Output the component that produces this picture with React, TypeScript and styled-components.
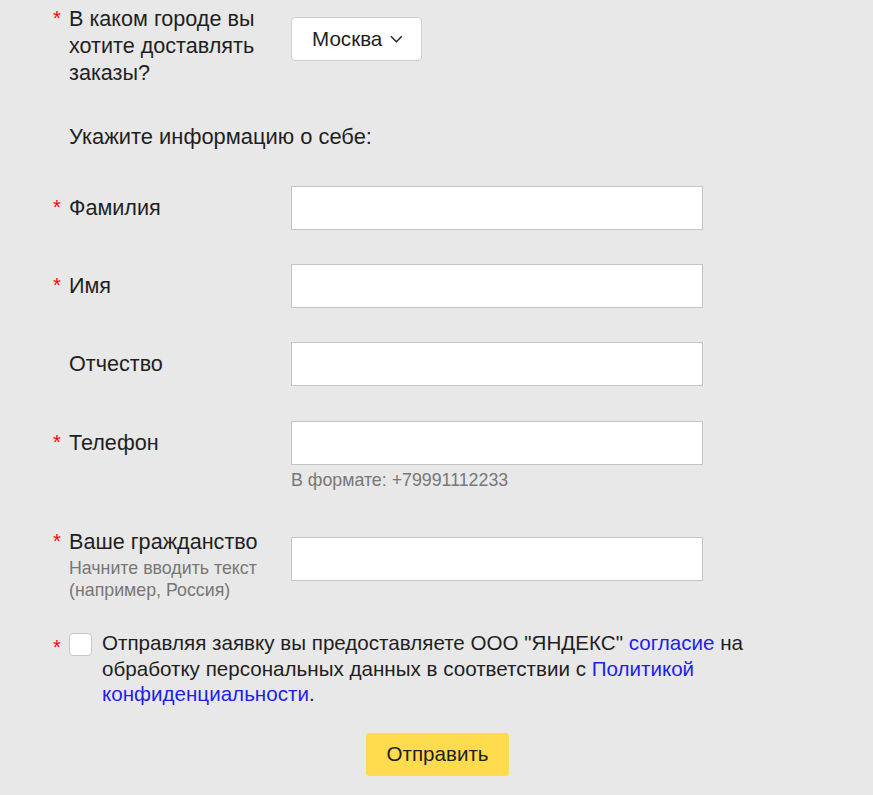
import React from "react";
import styled, { createGlobalStyle } from "styled-components";

const GlobalStyle = createGlobalStyle`
  html, body {
    margin: 0;
    padding: 0;
    background: #e8e8e8;
  }
  body {
    font-family: "Liberation Sans", Arial, sans-serif;
    color: #1f1f1f;
  }
`;

const Page = styled.div`
  width: 873px;
  min-height: 795px;
  box-sizing: border-box;
  padding: 4px 0 0 53px;
  display: flex;
  flex-direction: column;
`;

const Row = styled.div<{ $mt?: number }>`
  display: flex;
  align-items: flex-start;
  margin-top: ${(p) => p.$mt ?? 0}px;
`;

const Star = styled.span<{ $pt?: number; $hidden?: boolean }>`
  width: 16px;
  flex: none;
  color: #ff0000;
  font-size: 20px;
  line-height: 26px;
  padding-top: ${(p) => p.$pt ?? 0}px;
  visibility: ${(p) => (p.$hidden ? "hidden" : "visible")};
`;

const LabelBox = styled.div<{ $pt?: number }>`
  width: 200px;
  margin-right: 22px;
  flex: none;
  padding-top: ${(p) => p.$pt ?? 0}px;
`;

const LabelText = styled.div`
  font-size: 21.6px;
  line-height: 27px;
`;

const SubLabel = styled.div`
  font-size: 17.8px;
  line-height: 22px;
  color: #777;
  margin-top: 2px;
`;

const Field = styled.div<{ $mt?: number }>`
  display: flex;
  flex-direction: column;
  margin-top: ${(p) => p.$mt ?? 0}px;
`;

const Input = styled.input`
  box-sizing: border-box;
  width: 412px;
  height: 44px;
  border: 1px solid #c4c4c4;
  background: #fff;
  font-family: inherit;
  font-size: 18px;
  padding: 0 12px;
  outline: none;
`;

const Hint = styled.div`
  font-size: 17.8px;
  line-height: 22px;
  color: #777;
  margin-top: 4px;
`;

const SelectButton = styled.button`
  box-sizing: border-box;
  width: 131px;
  height: 44px;
  margin-top: 13px;
  border: 1px solid #cfcfcf;
  border-radius: 4px;
  background: #fff;
  display: flex;
  align-items: center;
  padding: 0 18px 0 20px;
  gap: 8px;
  font-family: inherit;
  font-size: 20.6px;
  color: #1f1f1f;
  cursor: pointer;
`;

const Heading = styled.div`
  margin-top: 38px;
  padding-left: 16px;
  font-size: 21.9px;
  line-height: 26px;
`;

const CheckRow = styled.div`
  display: flex;
  align-items: flex-start;
  margin-top: 29px;
`;

const Checkbox = styled.span`
  box-sizing: border-box;
  flex: none;
  width: 23px;
  height: 23px;
  margin-top: 3px;
  margin-right: 10px;
  border: 1px solid #c8c8c8;
  border-radius: 4px;
  background: #fff;
`;

const Consent = styled.div`
  width: 660px;
  font-size: 20.6px;
  line-height: 25.5px;
`;

const Link = styled.a`
  color: #1f1fe8;
  text-decoration: none;
`;

const ButtonWrap = styled.div`
  display: flex;
  justify-content: center;
  margin: 26px 0 0 -51px;
`;

const SubmitButton = styled.button`
  width: 143px;
  height: 43px;
  border: none;
  border-radius: 3px;
  background: #ffdb4d;
  font-family: inherit;
  font-size: 20.6px;
  color: #1f1f1f;
  cursor: pointer;
`;

const Chevron = () => (
  <svg width="14" height="8" viewBox="0 0 14 8" fill="none">
    <path d="M1 1l6 6 6-6" stroke="#222" strokeWidth="1.6" />
  </svg>
);

type FieldRowProps = {
  label: string;
  required?: boolean;
  hint?: string;
  mt?: number;
};

const FieldRow = ({ label, required, hint, mt }: FieldRowProps) => (
  <Row $mt={mt}>
    <Star $hidden={!required} $pt={8}>
      *
    </Star>
    <LabelBox $pt={8}>
      <LabelText>{label}</LabelText>
    </LabelBox>
    <Field>
      <Input />
      {hint && <Hint>{hint}</Hint>}
    </Field>
  </Row>
);

export default function App() {
  return (
    <>
      <GlobalStyle />
      <Page>
        <Row>
          <Star $pt={1}>*</Star>
          <LabelBox $pt={1}>
            <LabelText>В каком городе вы хотите доставлять заказы?</LabelText>
          </LabelBox>
          <SelectButton>
            Москва
            <Chevron />
          </SelectButton>
        </Row>

        <Heading>Укажите информацию о себе:</Heading>

        <FieldRow label="Фамилия" required mt={36} />
        <FieldRow label="Имя" required mt={34} />
        <FieldRow label="Отчество" mt={34} />
        <FieldRow
          label="Телефон"
          required
          mt={35}
          hint="В формате: +79991112233"
        />

        <Row $mt={36}>
          <Star $pt={1}>*</Star>
          <LabelBox $pt={1}>
            <LabelText>Ваше гражданство</LabelText>
            <SubLabel>Начните вводить текст (например, Россия)</SubLabel>
          </LabelBox>
          <Field $mt={10}>
            <Input />
          </Field>
        </Row>

        <CheckRow>
          <Star $pt={4}>*</Star>
          <Checkbox />
          <Consent>
            Отправляя заявку вы предоставляете ООО "ЯНДЕКС"{" "}
            <Link href="#">согласие</Link> на обработку персональных данных в
            соответствии с <Link href="#">Политикой конфиденциальности</Link>.
          </Consent>
        </CheckRow>

        <ButtonWrap>
          <SubmitButton>Отправить</SubmitButton>
        </ButtonWrap>
      </Page>
    </>
  );
}
